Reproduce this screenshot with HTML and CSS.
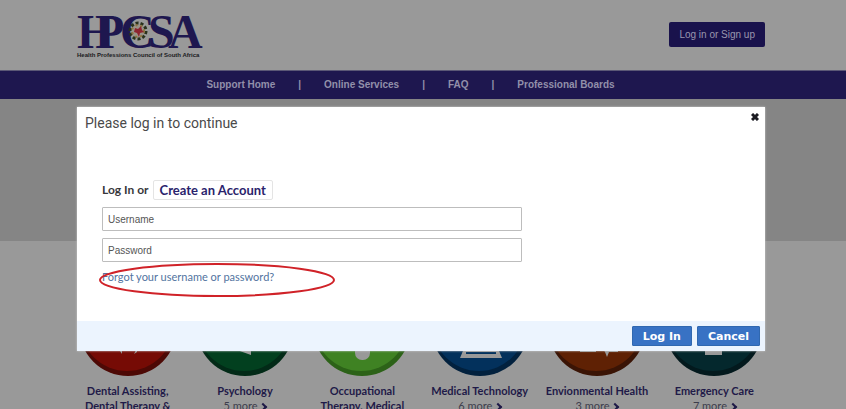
FILE: index.html
```html
<!DOCTYPE html>
<html lang="en">
<head>
<meta charset="utf-8">
<title>HPCSA Support</title>
<link rel="stylesheet" href="styles.css">
</head>
<body>
<header class="container header">
  <svg class="logo" width="128" height="48" viewBox="0 0 128 48" role="img" aria-label="HPCSA">
    <g class="logo-name"><text x="0" y="34">H</text><text x="18" y="34">P</text><text x="43" y="34">C</text><text x="71" y="34">S</text><text x="91" y="34">A</text></g>
    <circle cx="61" cy="17" r="7" fill="#999388"/>
    <circle cx="61" cy="17" r="8" fill="none" stroke="#29311d" stroke-width="3" stroke-dasharray="3 2"/>
    <circle cx="61" cy="17" r="6" fill="none" stroke="#8d7540" stroke-width="2" stroke-dasharray="2 3"/>
    <path d="M58 14l3 1 3-3 1 4 2 2-4 1-1 4-2-4-3-1z" fill="#8e2430"/>
    <text class="logo-sub" x="0" y="43">Health Professions Council of South Africa</text>
  </svg>
  <button class="signup" type="button">Log in or Sign up</button>
</header>
<nav class="nav">
  <a href="#">Support Home</a><span>|</span><a href="#">Online Services</a><span>|</span><a href="#">FAQ</a><span>|</span><a href="#">Professional Boards</a>
</nav>
<div class="hero"></div>
<main class="boards">
  <a class="board" href="#">
    <svg viewBox="0 0 98 98"><circle cx="49" cy="49" r="49" fill="#4d0905"/><circle cx="48" cy="46" r="47" fill="#760b05"/><path d="M39 70l4 6v-6zM55 76l3-6v4z" fill="#999"/></svg>
    <b>Dental Assisting, Dental Therapy &amp;</b>
  </a>
  <a class="board" href="#">
    <svg viewBox="0 0 98 98"><circle cx="49" cy="49" r="49" fill="#022a17"/><circle cx="48" cy="46" r="47" fill="#02401f"/><path d="M41 72h14v5z" fill="#999"/></svg>
    <b>Psychology</b><span>5 more <i></i></span>
  </a>
  <a class="board" href="#">
    <svg viewBox="0 0 98 98"><circle cx="49" cy="49" r="49" fill="#2c6218"/><circle cx="48" cy="46" r="47" fill="#3f8223"/><rect x="42" y="56" width="15" height="26" rx="7" fill="#999"/></svg>
    <b>Occupational Therapy, Medical</b>
  </a>
  <a class="board" href="#">
    <svg viewBox="0 0 98 98"><circle cx="49" cy="49" r="49" fill="#02213e"/><circle cx="48" cy="46" r="47" fill="#03315c"/><path d="M34 68h32l5 12H29z" fill="#999"/><path d="M35 75h30" stroke="#03315c" stroke-width="2"/></svg>
    <b>Medical Technology</b><span>6 more <i></i></span>
  </a>
  <a class="board" href="#">
    <svg viewBox="0 0 98 98"><circle cx="49" cy="49" r="49" fill="#3a1405"/><circle cx="48" cy="46" r="47" fill="#5f2104"/><path d="M32 71h16v3H32zM55 71h15v3h-9l-2 5-2-5z" fill="#999"/></svg>
    <b>Envionmental Health</b><span>3 more <i></i></span>
  </a>
  <a class="board" href="#">
    <svg viewBox="0 0 98 98"><circle cx="49" cy="49" r="49" fill="#03191d"/><circle cx="48" cy="46" r="47" fill="#04282d"/><path d="M40 60h17v17H40z" fill="#999"/></svg>
    <b>Emergency Care</b><span>7 more <i></i></span>
  </a>
</main>
<div class="overlay">
  <form class="dialog" role="dialog" aria-labelledby="title">
    <div class="dialog-head">
      <h1 id="title">Please log in to continue</h1>
      <button class="close" type="button" aria-label="Close"><svg width="8" height="8" viewBox="0 0 8 8"><path d="M1 1l6 6M7 1L1 7" stroke="#1b1b22" stroke-width="3"/></svg></button>
    </div>
    <div class="dialog-body">
      <p class="choice">Log In or <a class="create" href="#">Create an Account</a></p>
      <input type="text" placeholder="Username" aria-label="Username">
      <input type="password" placeholder="Password" aria-label="Password">
      <div class="forgot">
        <a href="#">Forgot your username or password?</a>
        <svg class="ring" width="240" height="36" viewBox="0 0 240 36"><ellipse cx="119" cy="18" rx="117" ry="16" fill="none" stroke="#d02228" stroke-width="2"/></svg>
      </div>
    </div>
    <div class="dialog-foot">
      <button type="submit">Log In</button>
      <button type="button">Cancel</button>
    </div>
  </form>
</div>
</body>
</html>
```

FILE: styles.css
```css
* { box-sizing: border-box; }
html, body { height: 100%; }
body {
  margin: 0;
  padding-right: 4px;
  overflow: hidden;
  background: #999;
  font-family: "Liberation Sans", Arial, sans-serif;
  position: relative;
}
a { text-decoration: none; }
button { font: inherit; cursor: pointer; }
.container { max-width: 688px; margin: 0 auto; }

.header {
  display: flex;
  justify-content: space-between;
  align-items: center;
  padding: 14px 0 8px;
}
.logo { display: block; overflow: visible; }
.logo-name {
  font: bold 48px "Liberation Serif", serif;
  fill: #1e174f;
}
.logo-sub {
  font: bold 6px "Liberation Sans", sans-serif;
  fill: #19191d;
}
.signup {
  height: 25px;
  margin-top: -8px;
  padding: 0 10px;
  border: 0;
  border-radius: 2px;
  background: #19124c;
  color: #9996ae;
  font: 10px "Liberation Sans", sans-serif;
}

.nav {
  display: flex;
  justify-content: center;
  gap: 23px;
  margin-right: -4px;
  padding-right: 25px;
  border-top: 1px solid #5b5876;
  background: #1e174f;
  color: #9290aa;
  font-size: 10px;
  font-weight: bold;
  line-height: 28px;
}
.nav a { color: inherit; }
.hero {
  height: 142px;
  margin-right: -4px;
  background: #858585;
}

.boards {
  display: grid;
  grid-template-columns: repeat(6, 1fr);
  max-width: 704px;
  margin: 0 auto;
  padding-top: 37px;
}
.board {
  display: flex;
  flex-direction: column;
  align-items: center;
  text-align: center;
  padding: 0 5px;
  color: #1f1a48;
  font: 11px/15px Lato, sans-serif;
}
.board svg { width: 98px; height: 98px; margin-bottom: 7px; }
.board span { color: #3d3d4c; }
.board i {
  display: inline-block;
  width: 6px;
  height: 6px;
  border: solid #1f1a48;
  border-width: 2px 2px 0 0;
  transform: rotate(45deg);
}

.overlay {
  position: absolute;
  inset: 0 4px 0 0;
  padding-top: 107px;
}
.dialog {
  max-width: 688px;
  margin: 0 auto;
  background: #fff;
  box-shadow: 0 0 2px #ccc;
}
.dialog-head {
  display: flex;
  justify-content: space-between;
  align-items: flex-start;
  padding: 4px 6px 0 8px;
}
h1 {
  margin: 0;
  font: 14px/24px Roboto, sans-serif;
  color: #4a4a4a;
}
.close { padding: 0; border: 0; background: none; line-height: 10px; }
.dialog-body {
  display: flex;
  flex-direction: column;
  align-items: flex-start;
  gap: 7px;
  padding: 45px 25px 36px;
}
.choice {
  display: flex;
  align-items: center;
  gap: 4px;
  margin: 0;
  color: #38383c;
  font: bold 12px/18px Lato, sans-serif;
}
.create {
  padding: 0 6px;
  border: 1px solid #e4e4e4;
  border-radius: 2px;
  color: #2a236c;
  font-size: 13px;
}
input {
  width: 420px;
  max-width: 100%;
  height: 24px;
  padding: 0 5px;
  border: 1px solid #bdbdbd;
  border-radius: 1px;
  outline: 0;
  font: 10px "Liberation Sans", sans-serif;
}
input::placeholder { color: #555; opacity: 1; }
.forgot {
  position: relative;
  font: 11px/16px Lato, sans-serif;
}
.forgot a { color: #5273a0; }
.ring {
  position: absolute;
  left: -4px;
  top: -7px;
  pointer-events: none;
}
.dialog-foot {
  display: flex;
  justify-content: flex-end;
  gap: 5px;
  padding: 5px;
  background: #ecf4fe;
}
.dialog-foot button {
  height: 20px;
  padding: 0 10px;
  border: 1px solid #3068b0;
  border-radius: 1px;
  background: #3872c4;
  color: #fff;
  font: bold 11px "DejaVu Sans", sans-serif;
}
```
